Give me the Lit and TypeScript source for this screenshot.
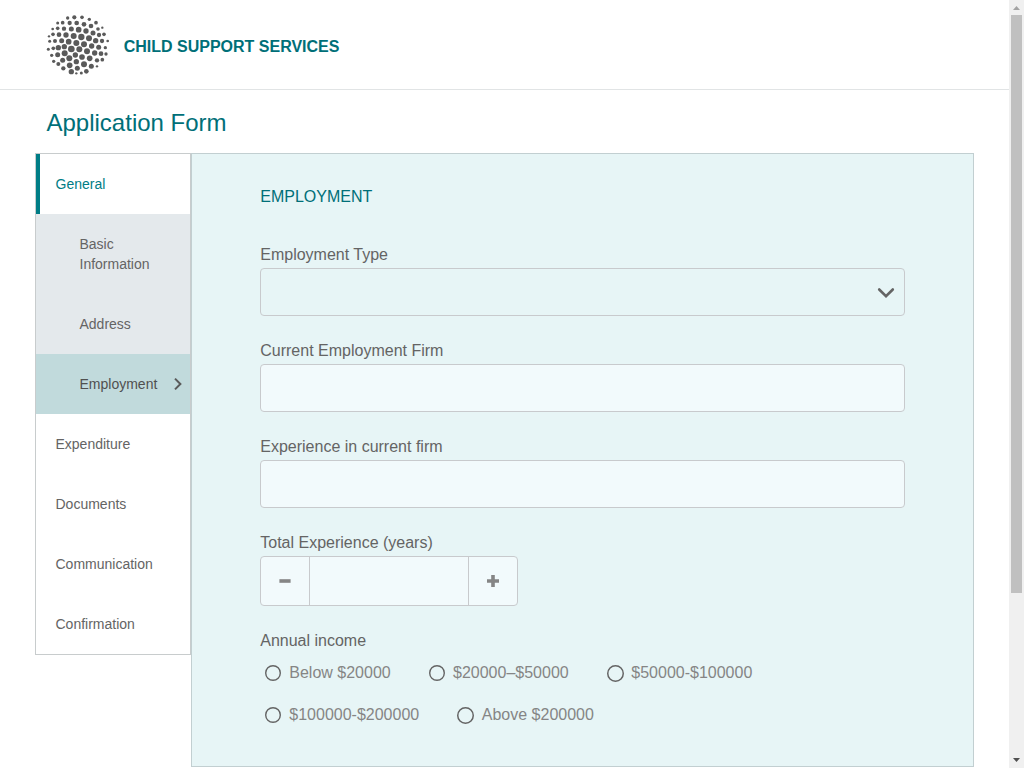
import { LitElement, html, css, svg } from "lit";
import { customElement } from "lit/decorators.js";
import { classMap } from "lit/directives/class-map.js";

// Logo dots: x, y, radius
const DOTS: number[][] = [
  [83,30,5],[103,28,6.2],[126,28,5.5],[148,34,5],
  [53,45,4.5],[68,44,5.5],[89,45,6.5],[110,45,7],[132,49,7],[168,44,5.5],
  [38,63,4],[53,61,5.5],[72,62,6.5],[94,63,7.5],[116,65,8.5],[138,69,8],[153,54,7],[174,63,5.5],[187,59,3.5],
  [27,85,3.5],[39,79,5.5],[57,80,7],[78,81,8],[101,84,9],[124,87,9.5],[147,91,9],[159,75,7.5],[177,81,6.5],[192,79,5.5],
  [29,100,4.5],[45,99,6],[65,98,7.5],[86,101,8.5],[109,105,9],[132,109,9],[167,98,8],[186,99,6.5],[203,99,4],
  [25,124,4.5],[40,121,5.5],[55,119,8],[73,116,8],[94,123,10],[118,124,9],[141,130,9],[155,114,8],[176,118,7.5],[196,119,5],
  [35,142,5],[53,140,7.5],[74,136,9],[88,151,9],[106,141,8],[126,147,8.5],[149,151,8.5],[164,135,8],[183,137,7],[198,138,5],
  [41,160,5],[55,168,6],[68,157,7.5],[89,172,8.5],[109,161,8],[132,169,9],[171,157,6.5],[187,155,5.5],[154,175,7.5],
  [70,181,6.5],[94,191,8],[112,181,7.5],[171,175,3.5],[139,190,7],[124,195,4.5],[109,196,3.5],
];

const NAV = [
  { label: "General", current: true },
  { label: "Basic Information", sub: true },
  { label: "Address", sub: true },
  { label: "Employment", sub: true, selected: true },
  { label: "Expenditure" },
  { label: "Documents" },
  { label: "Communication" },
  { label: "Confirmation" },
];

const INCOME = [
  [{ label: "Below $20000" }, { label: "$20000–$50000" }, { label: "$50000-$100000", wide: true }],
  [{ label: "$100000-$200000" }, { label: "Above $200000", wide: true }],
];

@customElement("app-root")
export class AppRoot extends LitElement {
  static styles = css`
    :host { display: flex; width: 1024px; height: 768px; overflow: hidden; background: #fff;
      font-family: "Liberation Sans", Arial, sans-serif; font-size: 16px; line-height: 20px; color: #646464; }
    * { box-sizing: border-box; }
    svg { display: block; }
    .page { flex: 1; min-width: 0; }
    .header { display: flex; align-items: flex-start; height: 90px; padding: 8px 0 0 40px; border-bottom: 1px solid #e1e4e5; }
    .brand { margin: 29px 0 0 7.7px; font-weight: bold; color: #006f78; }
    .title { margin: 0; padding: 17px 0 0 46.5px; height: 63px; font-size: 24px; font-weight: normal; line-height: 32px; color: #006f78; }
    .body { display: flex; align-items: flex-start; padding-left: 35px; }
    .nav { width: 156px; border: 1px solid #c8cccd; font-size: 14px; }
    .item { display: flex; align-items: center; justify-content: space-between; min-height: 60px; padding: 20px 8px 20px 19.5px; }
    .current { border-left: 4px solid #007d86; padding-left: 15.5px; color: #007d86; }
    .sub { padding-left: 43.5px; background: #e4e9ec; }
    .selected { background: #c1dadc; color: #505050; }
    .panel { width: 783px; height: 614px; padding: 33px 68px 0 68.25px; border: 1px solid #c2cfd1; background: #e7f5f6; }
    .heading { margin: 0 0 38px; font-size: 16px; font-weight: normal; color: #006f78; }
    .field { margin-bottom: 25px; }
    .label { margin-bottom: 3px; }
    .input { width: 645px; height: 48px; border: 1px solid #c8cacd; border-radius: 4px; background: #f2fafc; }
    .select { display: flex; align-items: center; justify-content: flex-end; padding: 1px 9px 0 0; background: transparent; }
    .stepper { display: flex; width: 258px; height: 50px; border: 1px solid #c8cacd; border-radius: 4px; background: #f2fafc; }
    .step { display: grid; place-items: center; width: 48px; }
    .value { flex: 1; border: solid #c8cacd; border-width: 0 1px; }
    .options { display: flex; gap: 38px; height: 42px; padding-left: 4.75px; color: #858585; }
    .group { margin-top: -2px; }
    .option { display: flex; align-items: center; gap: 8.3px; }
    .ring { width: 16px; height: 16px; }
    .option.wide { gap: 7.6px; }
    .wide .ring { width: 17px; height: 17px; margin-top: 1px; }
    .scroll { display: flex; flex-direction: column; align-items: center; width: 15px; background: #f0f0f0; }
    .arrow { width: 15px; height: 15px; }
    .track { flex: 1; }
    .thumb { width: 11px; height: 578px; background: #c0c0c0; }
  `;

  render() {
    return html`
      <div class="page">
        <header class="header">
          <svg width="76" height="74" viewBox="0 0 228 222" fill="#5a5a5a">
            ${DOTS.map(([x, y, r]) => svg`<circle cx=${x} cy=${y} r=${r}></circle>`)}
          </svg>
          <div class="brand">CHILD SUPPORT SERVICES</div>
        </header>
        <h1 class="title">Application Form</h1>
        <div class="body">
          <nav class="nav">
            ${NAV.map((n) => html`
              <div class=${classMap({ item: true, current: !!n.current, sub: !!n.sub, selected: !!n.selected })}>
                <span>${n.label}</span>
                ${n.selected
                  ? html`<svg width="9" height="14" viewBox="0 0 9 14" fill="none" stroke="#5a5a5a" stroke-width="2"><path d="M2 1.6 7.4 7 2 12.4"/></svg>`
                  : ""}
              </div>`)}
          </nav>
          <main class="panel">
            <h2 class="heading">EMPLOYMENT</h2>
            <div class="field">
              <div class="label">Employment Type</div>
              <div class="input select">
                <svg width="18" height="12" viewBox="0 0 18 12" fill="none" stroke="#646464" stroke-width="2.6" stroke-linecap="round"><path d="M2.2 2.5 9 9.1l6.8-6.6"/></svg>
              </div>
            </div>
            <div class="field"><div class="label">Current Employment Firm</div><div class="input"></div></div>
            <div class="field"><div class="label">Experience in current firm</div><div class="input"></div></div>
            <div class="field">
              <div class="label">Total Experience (years)</div>
              <div class="stepper">
                <div class="step"><svg width="12" height="12" viewBox="0 0 12 12"><path fill="#858585" d="M.4 4.2h11.2v3.6H.4z"/></svg></div>
                <div class="value"></div>
                <div class="step"><svg width="12" height="12" viewBox="0 0 12 12"><path fill="#858585" d="M0 4.2h4.2V0h3.6v4.2H12v3.6H7.8V12H4.2V7.8H0z"/></svg></div>
              </div>
            </div>
            <div class="label">Annual income</div>
            <div class="group">
              ${INCOME.map((row) => html`<div class="options">
                ${row.map((o: { label: string; wide?: boolean }) => html`<div class=${classMap({ option: true, wide: !!o.wide })}>
                  <svg class="ring" viewBox="0 0 16 16" fill="none" stroke="#646464" stroke-width="1.4"><circle cx="8" cy="8" r="7.3"/></svg>
                  <span>${o.label}</span>
                </div>`)}
              </div>`)}
            </div>
          </main>
        </div>
      </div>
      <div class="scroll">
        <svg class="arrow" viewBox="0 0 15 15"><path fill="#a3a3a3" d="M4 10 7.5 6 11 10z"/></svg>
        <div class="track"><div class="thumb"></div></div>
        <svg class="arrow" viewBox="0 0 15 15"><path fill="#505050" d="M4 5h7L7.5 9z"/></svg>
      </div>`;
  }
}
